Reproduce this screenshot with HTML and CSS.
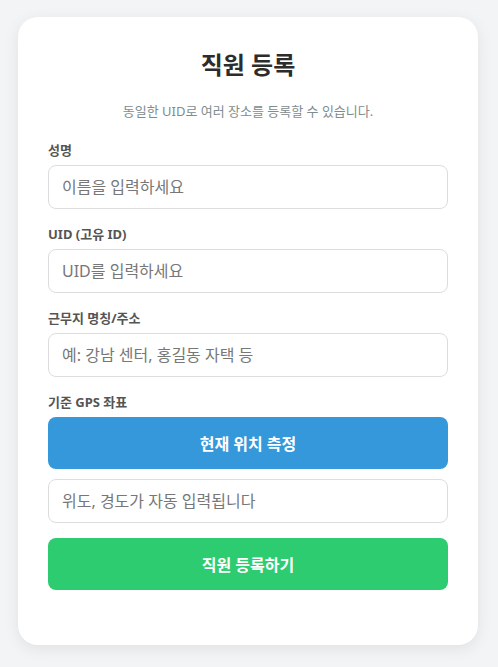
FILE: index.html
```html
<!DOCTYPE html>
<html lang="ko">
<head>
    <meta charset="UTF-8">
    <meta name="viewport" content="width=device-width, initial-scale=1.0">
    <title>직원 등록</title>
    <link rel="stylesheet" href="styles.css">
</head>
<body>
    <div class="card">
        <h2 class="title">직원 등록</h2>
        <p class="subtitle">동일한 UID로 여러 장소를 등록할 수 있습니다.</p>

        <div class="field">
            <label for="name">성명</label>
            <input type="text" id="name" placeholder="이름을 입력하세요">
        </div>

        <div class="field">
            <label for="uid">UID (고유 ID)</label>
            <input type="text" id="uid" placeholder="UID를 입력하세요">
        </div>

        <div class="field">
            <label for="place">근무지 명칭/주소</label>
            <input type="text" id="place" placeholder="예: 강남 센터, 홍길동 자택 등">
        </div>

        <div class="field gps-field">
            <label>기준 GPS 좌표</label>
            <button class="btn btn-blue" type="button">현재 위치 측정</button>
            <input type="text" id="gps" class="gps-input" placeholder="위도, 경도가 자동 입력됩니다" readonly>
        </div>

        <button class="btn btn-green" type="button">직원 등록하기</button>
    </div>
</body>
</html>
```

FILE: styles.css
```css
/* Page */
body {
    margin: 0;
    padding: 17px 20px 17px 18px;
    background: #f3f4f6;
    font-family: "Noto Sans", "Noto Sans CJK KR", sans-serif;
}
.card {
    background: #fff;
    border-radius: 20px;
    padding: 29px 30px 55px;
    box-shadow: 0 4px 16px rgba(0, 0, 0, 0.08);
}
.title {
    margin: 0 0 20px;
    text-align: center;
    font-size: 24px;
    color: #2c2c2c;
}
.subtitle {
    margin: 0 0 20px;
    text-align: center;
    font-size: 13px;
    color: #7f8c8d;
}
/* Form fields */
.field {
    margin-bottom: 15px;
}
.field label {
    display: block;
    margin-bottom: 6px;
    font-size: 13px;
    font-weight: bold;
    color: #555;
}
.field input {
    display: block;
    box-sizing: border-box;
    width: 100%;
    height: 44px;
    padding: 0 13px;
    border: 1px solid #ddd;
    border-radius: 8px;
    font-family: inherit;
    font-size: 16px;
    color: #333;
}
.field input::placeholder {
    color: #777;
}
.gps-field {
    margin-bottom: 15px;
}
.gps-input {
    margin-top: 10px;
}
/* Buttons */
.btn {
    display: block;
    width: 100%;
    height: 52px;
    border: none;
    border-radius: 8px;
    color: #fff;
    font-family: inherit;
    font-size: 16px;
    font-weight: bold;
    cursor: pointer;
}
.btn-blue {
    background: #3498db;
}
.btn-green {
    background: #2ecc71;
}
```
